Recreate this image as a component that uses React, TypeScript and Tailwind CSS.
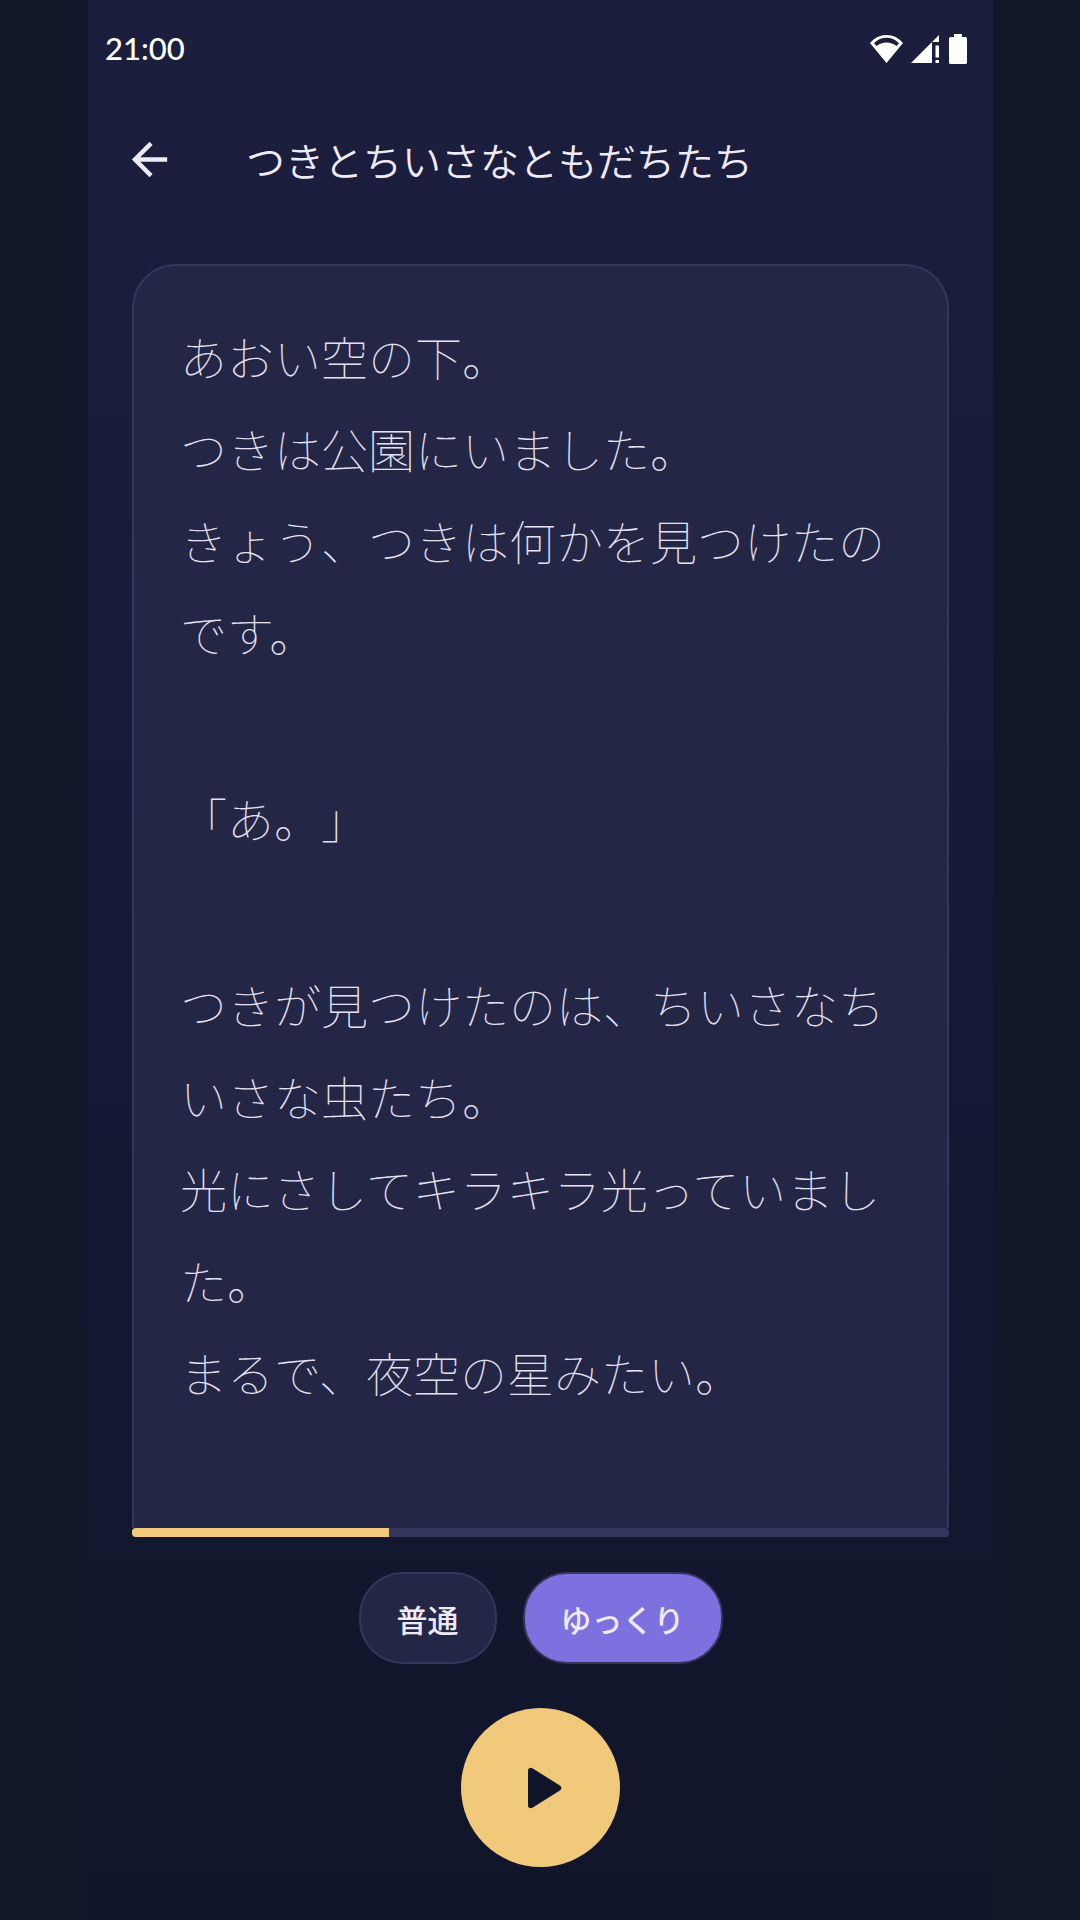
import { useState } from "react"
import { clsx } from "clsx"
import { MdArrowBack } from "react-icons/md"

const story = [
  [
    "あおい空の下。",
    "つきは公園にいました。",
    "きょう、つきは何かを見つけたのです。",
  ],
  ["「あ。」"],
  [
    "つきが見つけたのは、ちいさなちいさな虫たち。",
    "光にさしてキラキラ光っていました。",
    "まるで、夜空の星みたい。",
  ],
]

const speeds = [
  { id: "normal", label: "普通" },
  { id: "slow", label: "ゆっくり" },
]

function WifiIcon() {
  return (
    <svg viewBox="0 0 33 28" className="w-[33px] h-7" aria-hidden="true">
      <path
        fill="currentColor"
        fillRule="evenodd"
        d="M16.500 28 0 8C4.500 2.700 10 0 16.500 0S28.500 2.700 33 8L16.500 28ZM4 8.300 6.500 11C9.500 8.700 12.700 7.500 16.500 7.500s7 1.200 10 3.500l2.500-2.700C25.200 4.600 21.300 2.800 16.500 2.800S7.800 4.600 4 8.300Z"
      />
    </svg>
  )
}

function SignalIcon() {
  return (
    <svg viewBox="0 0 28 28" className="w-7 h-7" aria-hidden="true">
      <path fill="currentColor" d="M28 0v7h-7v21H0L28 0ZM24.500 10.500H28v12h-3.500zM24.500 25H28v3h-3.500z" />
    </svg>
  )
}

function BatteryIcon() {
  return (
    <svg viewBox="0 0 18 30" className="w-[18px] h-[30px]" aria-hidden="true">
      <path
        fill="currentColor"
        d="M5 0h8v3h3.500A1.500 1.500 0 0 1 18 4.500v24a1.500 1.500 0 0 1-1.500 1.500h-15A1.500 1.500 0 0 1 0 28.500v-24A1.500 1.500 0 0 1 1.500 3H5V0Z"
      />
    </svg>
  )
}

function StatusBar() {
  return (
    <div className="flex h-[97px] items-center justify-between pr-[26px] pl-[17px] text-white">
      <span className="font-[Lato,sans-serif] text-[31px] leading-none font-medium">21:00</span>
      <div className="flex items-center gap-2">
        <WifiIcon />
        <SignalIcon />
        <div className="pl-0.5">
          <BatteryIcon />
        </div>
      </div>
    </div>
  )
}

function ProgressBar({ value }: { value: number }) {
  return (
    <div
      role="progressbar"
      aria-label="再生位置"
      aria-valuenow={value}
      aria-valuemin={0}
      aria-valuemax={100}
      className="h-[9px] overflow-hidden rounded-[4px] bg-[#35365d]"
    >
      <div className="h-full bg-[#f0c97a]" style={{ width: `${value}%` }} />
    </div>
  )
}

export default function App() {
  const [speed, setSpeed] = useState("slow")

  return (
    <div className="flex min-h-screen flex-col bg-[#111629] pr-[87px] pl-[88px] font-['Noto_Sans_CJK_JP',sans-serif]">
      <div className="flex flex-1 flex-col bg-linear-to-b from-[#1b1e3d] via-[#171a37] via-50% to-[#101529]">
        <StatusBar />

        <header className="flex h-[124px] items-center gap-[70px] px-[35px]">
          <button type="button" aria-label="戻る" className="text-[#efeaf8]">
            <MdArrowBack className="size-[53px]" />
          </button>
          <h1 className="text-[39px] leading-[56px] font-[350] text-[#efeaf8]">つきとちいさなともだちたち</h1>
        </header>

        <main className="flex flex-1 flex-col px-11 pt-[43px] pb-[53px]">
          <article className="flex flex-1 flex-col gap-[94px] rounded-t-[44px] border-2 border-b-0 border-[#34365f] bg-[#232645] px-[46px] pt-11 text-[47px] leading-[92px] font-thin text-[#e6e1f2] [text-spacing-trim:space-all]">
            {story.map((lines, i) => (
              <div key={i}>
                {lines.map((line) => (
                  <p key={line}>{line}</p>
                ))}
              </div>
            ))}
          </article>
          <ProgressBar value={31.4} />

          <div className="mt-[35px] flex justify-center gap-[26px]">
            {speeds.map((s) => (
              <button
                key={s.id}
                type="button"
                aria-pressed={speed === s.id}
                onClick={() => setSpeed(s.id)}
                className={clsx(
                  "h-[92px] rounded-[44px] border-2 border-[#35365d] px-9 text-[31px] leading-none font-medium text-[#efeaf8]",
                  speed === s.id ? "bg-[#7d70df]" : "bg-[#232645]",
                )}
              >
                {s.label}
              </button>
            ))}
          </div>

          <button
            type="button"
            aria-label="再生"
            className="mt-11 flex size-[159px] items-center justify-center self-center rounded-full bg-[#f0c97a] text-[#101529]"
          >
            <svg viewBox="0 0 40 42" className="ml-2 h-[42px] w-10" aria-hidden="true">
              <path
                fill="currentColor"
                d="M3 4C3 1 5.200-.200 7.800 1.400L34.500 18.300c2.500 1.600 2.500 3.800 0 5.400L7.800 40.600C5.200 42.200 3 41 3 38Z"
              />
            </svg>
          </button>
        </main>
      </div>
    </div>
  )
}
